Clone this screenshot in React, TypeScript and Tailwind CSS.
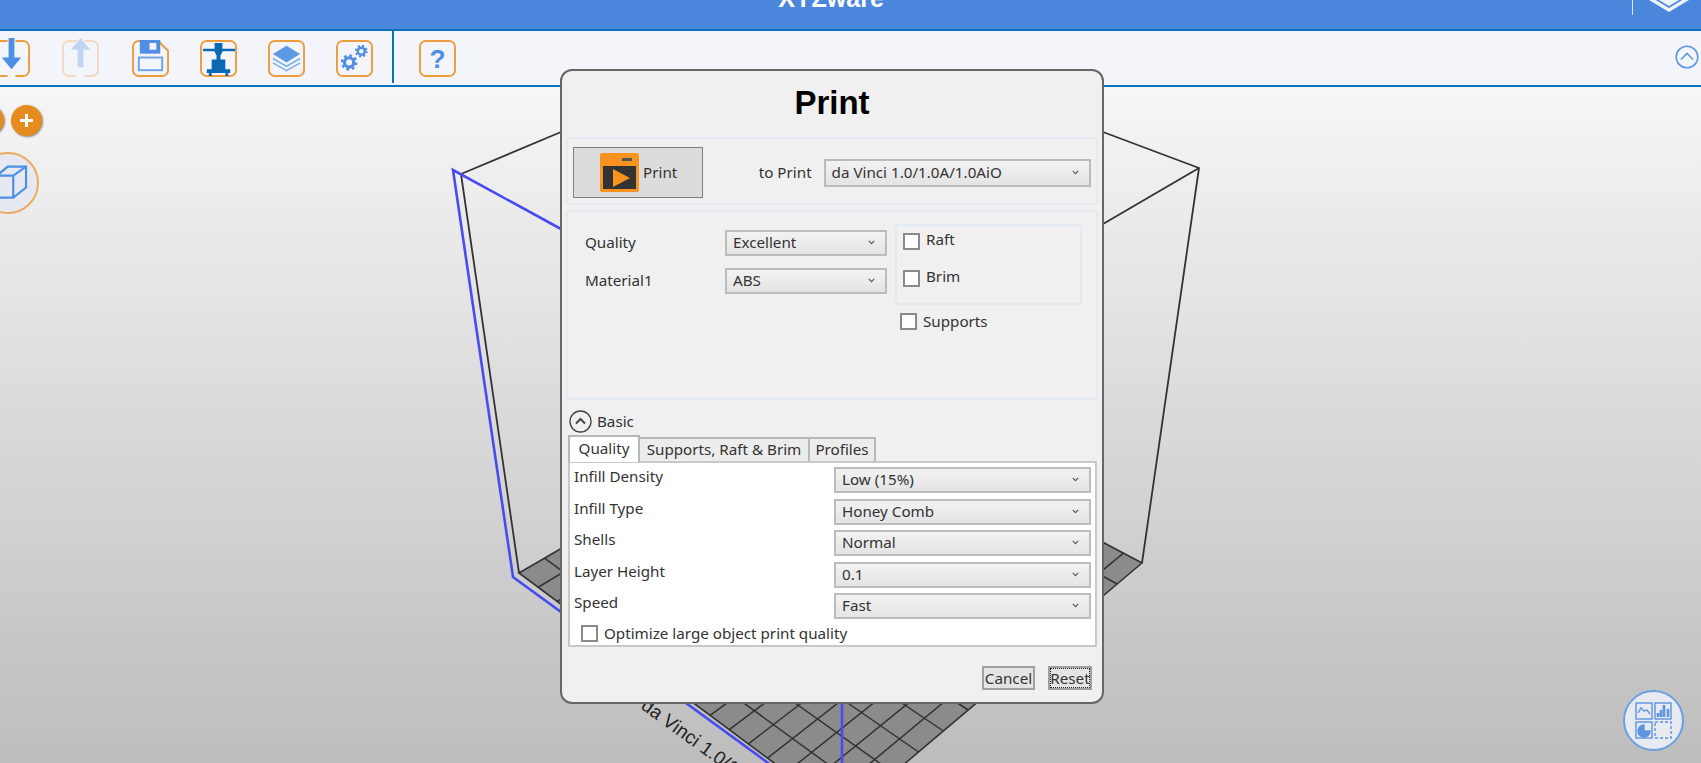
import { ReactNode } from 'react';

const ORANGE = '#ee9d3e';
const BLUE = '#4f8fe3';
const DARK = '#0a69b5';

// floor corners in page coordinates
const L = [519, 573];
const T = [825, 395];
const R = [1142, 563];
const B = [844, 815];

function lerp(a: number[], b: number[], t: number) {
  return [a[0] + (b[0] - a[0]) * t, a[1] + (b[1] - a[1]) * t];
}

function floorLines() {
  const lines: number[][][] = [];
  const nA = 17;
  const nB = 12;
  for (let i = 1; i < nA; i++) lines.push([lerp(L, B, i / nA), lerp(T, R, i / nA)]);
  for (let i = 1; i < nB; i++) lines.push([lerp(L, T, i / nB), lerp(B, R, i / nB)]);
  return lines;
}

function Scene() {
  return (
    <svg className="absolute left-0 top-[-87px] w-[1701px] h-[763px]" viewBox="0 0 1701 763">
      <polygon points={[L, T, R, B].map(p => p.join(',')).join(' ')} fill="#8b8b8b" stroke="#333" strokeWidth="1.6" />
      {floorLines().map((l, i) => (
        <line key={i} x1={l[0][0]} y1={l[0][1]} x2={l[1][0]} y2={l[1][1]} stroke="#333" strokeWidth="1.5" />
      ))}
      {/* bounding box */}
      <g stroke="#333" strokeWidth="1.8" fill="none">
        <path d="M461 174 L519 573" />
        <path d="M461 174 L561 132" />
        <path d="M1103 132 L1199 168 L1142 563" />
        <path d="M1199 168 L1103 224" />
      </g>
      <g stroke="#4a4af0" strokeWidth="2.6" fill="none">
        <path d="M561 229 L453 170 L513 577 L775 768" />
        <path d="M842 695 L842 763" />
      </g>
      <text x="640" y="708" transform="rotate(36 640 708)" fontFamily="'Liberation Sans', sans-serif" fontSize="19" fill="#222">
        da Vinci 1.0/1.0A/1.0AiO
      </text>
    </svg>
  );
}

function Frame({ children, className = '', frame = true }: { children: ReactNode; className?: string; frame?: boolean }) {
  return (
    <svg className={`w-[37px] h-[37px] shrink-0 overflow-visible ${className}`} viewBox="0 0 38 38">
      {frame && <rect x="1" y="1" width="36" height="36" rx="6" fill="none" stroke={ORANGE} strokeWidth="2" />}
      {children}
    </svg>
  );
}

function Gear({ cx, cy, r }: { cx: number; cy: number; r: number }) {
  const c = 2 * Math.PI * (r + 0.5);
  return (
    <g fill="none" stroke={BLUE}>
      <circle cx={cx} cy={cy} r={r * 0.72} strokeWidth={r * 0.5} />
      <circle cx={cx} cy={cy} r={r + 0.5} strokeWidth={r * 0.42} strokeDasharray={`${c / 16} ${c / 16}`} />
    </g>
  );
}

function Toolbar() {
  return (
    <div className="h-[54px] bg-[#f3f5fa] flex items-center shrink-0">
      <div className="flex items-center gap-[31px] -ml-[7px]">
        <Frame>
          <path d="M19 -2 V38" stroke="#f3f5fa" strokeWidth="8" />
          <path d="M16 -2 H22 V18 H29 L19 30 L9 18 H16 Z" fill={BLUE} />
        </Frame>
        <Frame className="opacity-30 ml-[1px]">
          <path d="M19 -2 V38" stroke="#f3f5fa" strokeWidth="8" />
          <path d="M19 -2 L29 10 H22 V28 H16 V10 H9 Z" fill={BLUE} />
        </Frame>
        <Frame frame={false} className="ml-[2px]">
          <path d="M7 1 H27 L37 11 V31 A6 6 0 0 1 31 37 H7 A6 6 0 0 1 1 31 V7 A6 6 0 0 1 7 1 Z" fill="none" stroke={ORANGE} strokeWidth="2" />
          <rect x="8" y="0" width="21" height="14" fill={BLUE} />
          <rect x="18" y="3" width="7" height="7" fill="#f3f5fa" />
          <rect x="7" y="18" width="24" height="13" fill="none" stroke="#6fa3e8" strokeWidth="2" />
        </Frame>
        <Frame>
          <rect x="3" y="9" width="33" height="2.5" fill={DARK} />
          <path d="M15 3 H23 V12 L21 16 V20 H26 V30 H31 V34 H7 V30 H12 V20 H17 V16 L15 12 Z" fill={DARK} />
          <rect x="9" y="34" width="3" height="3" fill={DARK} />
          <rect x="26" y="34" width="3" height="3" fill={DARK} />
        </Frame>
        <Frame>
          <path d="M19 6 L33 14.5 L19 23 L5 14.5 Z" fill="#5c9ae6" />
          <path d="M5 19 L19 27 L33 19" fill="none" stroke="#7eb0ec" strokeWidth="1.6" />
          <path d="M5 23.5 L19 31.5 L33 23.5" fill="none" stroke="#7eb0ec" strokeWidth="1.6" />
        </Frame>
        <Frame>
          <Gear cx={13.5} cy={23} r={6.6} />
          <Gear cx={26} cy={11.5} r={5} />
        </Frame>
      </div>
      <div className="w-[2px] h-[52px] self-start ml-[19px] mr-[25px] bg-[#0a6fbd]" />
      <Frame>
        <text x="19" y="29" textAnchor="middle" fontFamily="'Liberation Sans', sans-serif" fontWeight="700" fontSize="27" fill={BLUE}>?</text>
      </Frame>
      <svg className="w-[24px] h-[24px] ml-auto mr-[2px] mb-[2px]" viewBox="0 0 24 24" fill="none" stroke="#5f98e2" strokeWidth="1.6">
        <circle cx="12" cy="12" r="10.8" />
        <path d="M6 14.5 L12 8.5 L18 14.5" />
      </svg>
    </div>
  );
}

function Select({ value, className }: { value: string; className: string }) {
  return (
    <div className={`flex items-center justify-between border-2 border-[#bcbcbc] bg-gradient-to-b from-[#f2f2f2] to-[#e4e4e4] pl-[6px] pr-[10px] pb-[1px] text-[15.2px] text-[#333] ${className}`}>
      <span>{value}</span>
      <svg className="w-[7px] h-[5px]" viewBox="0 0 9 6" fill="none" stroke="#555" strokeWidth="1.4">
        <path d="M1 1 L4.5 4.5 L8 1" />
      </svg>
    </div>
  );
}

function Check({ label, textClass = 'ml-[6px]' }: { label: string; textClass?: string }) {
  return (
    <div className="flex items-center text-[15.2px] text-[#333] h-[18px]">
      <span className="w-[17px] h-[17px] border-2 border-[#8a8a8a] bg-white shrink-0" />
      <span className={textClass}>{label}</span>
    </div>
  );
}

function Group({ className, children }: { className: string; children: ReactNode }) {
  return <div className={`rounded-[4px] border-2 border-[#e2e9f1] ${className}`}>{children}</div>;
}

const ROWS = [
  ['Infill Density', 'Low (15%)'],
  ['Infill Type', 'Honey Comb'],
  ['Shells', 'Normal'],
  ['Layer Height', '0.1'],
  ['Speed', 'Fast'],
];

function PrintDialog() {
  return (
    <div className="absolute left-[560px] top-[69px] w-[544px] h-[635px] rounded-[12px] border-2 border-[#666] bg-[#f0f0f0] px-[4px] text-[#333]">
      <div className="h-[66px] flex items-center justify-center font-bold text-[33px] text-black font-['Liberation_Sans',sans-serif] pb-[2px]">
        Print
      </div>

      <Group className="h-[68px] flex items-center pl-[5px] pr-[5px] pt-[3px]">
        <div className="w-[130px] h-[51px] bg-[#dcdcdc] border-[1.5px] border-[#808080] flex items-center pl-[26px] gap-[4px] text-[15.2px]">
          <svg className="w-[39px] h-[39px] shrink-0" viewBox="0 0 39 39">
            <rect x="0" y="0" width="39" height="39" rx="2" fill="#f7931e" />
            <rect x="3" y="13" width="33" height="23" fill="#333" />
            <rect x="22" y="5" width="10" height="3" fill="#555" />
            <path d="M13 16 L30 25 L13 34 Z" fill="#f7931e" />
          </svg>
          Print
        </div>
        <span className="ml-[56px] text-[15.2px] w-[65px]">to Print</span>
        <Select value="da Vinci 1.0/1.0A/1.0AiO" className="w-[268px] h-[28px]" />
      </Group>

      <Group className="h-[190px] mt-[5px] flex">
        <div className="pl-[17px] pt-[18px] flex flex-col gap-[12px]">
          {[['Quality', 'Excellent'], ['Material1', 'ABS']].map(([label, value]) => (
            <div key={label} className="flex items-center text-[15.2px]">
              <span className="w-[140px] pb-[2px]">{label}</span>
              <Select value={value} className="w-[162px] h-[26px]" />
            </div>
          ))}
        </div>
        <div className="ml-[8px] pt-[12px]">
          <Group className="w-[187px] h-[81px] pl-[6px] pt-[6px] flex flex-col gap-[19px]">
            <Check label="Raft" textClass="ml-[6px] -mt-[3px]" />
            <Check label="Brim" textClass="ml-[6px] -mt-[3px]" />
          </Group>
          <div className="mt-[7px] pl-[5px]">
            <Check label="Supports" />
          </div>
        </div>
      </Group>

      <div className="mt-[9px] h-[24px] flex items-center gap-[5px] text-[15.2px] pl-[3px]">
        <svg className="w-[23px] h-[23px]" viewBox="0 0 23 23" fill="none" stroke="#444">
          <circle cx="11.5" cy="11.5" r="10.5" strokeWidth="1.3" />
          <path d="M7 13.5 L11.5 9 L16 13.5" strokeWidth="2" />
        </svg>
        Basic
      </div>

      <div className="flex items-end h-[26px] mt-[2px] pl-[2px] text-[15.2px] relative z-10">
        <div className="w-[72px] h-[27px] -mb-[1px] pb-[2px] bg-white border-2 border-b-0 border-[#b8b8b8] flex items-center justify-center">Quality</div>
        <div className="w-[170px] h-[24px] pb-[1px] bg-[#ececec] border-2 border-l-0 border-b-0 border-[#b8b8b8] flex items-center justify-center">Supports, Raft &amp; Brim</div>
        <div className="w-[66px] h-[24px] pb-[1px] bg-[#ececec] border-2 border-l-0 border-b-0 border-[#b8b8b8] flex items-center justify-center">Profiles</div>
      </div>

      <div className="ml-[2px] w-[529px] h-[186px] bg-white border-2 border-[#c8c8c8] pl-[4px] pr-[4px] pt-[4px] text-[15.2px]">
        <div className="flex flex-col gap-[5.5px]">
          {ROWS.map(([label, value]) => (
            <div key={label} className="flex items-start justify-between h-[26px]">
              <span className="leading-[19px]">{label}</span>
              <Select value={value} className="w-[257px] h-[26px]" />
            </div>
          ))}
        </div>
        <div className="mt-[5px] pl-[7px]">
          <Check label="Optimize large object print quality" />
        </div>
      </div>

      <div className="flex justify-end gap-[13px] mt-[19px] pr-[6px] text-[15.2px]">
        <div className="w-[53px] h-[24px] bg-[#e4e4e4] border-2 border-[#a0a0a0] flex items-center justify-center">Cancel</div>
        <div className="w-[44px] h-[24px] bg-[#e4e4e4] border-2 border-[#a0a0a0] outline-1 outline-dotted outline-[#222] outline-offset-[-3px] flex items-center justify-center">Reset</div>
      </div>
    </div>
  );
}

export default function App() {
  return (
    <div className="relative w-[1701px] h-[763px] overflow-hidden flex flex-col font-['Noto_Sans',sans-serif]">
      <div className="h-[29px] bg-[#4a86dc] overflow-hidden flex justify-center pr-[39px] shrink-0">
        <span className="-mt-[14px] text-[25px] leading-[25px] font-bold text-white font-['Liberation_Sans',sans-serif]">XYZware</span>
      </div>
      <div className="absolute right-[11px] top-0 flex gap-[15px] items-start">
        <div className="w-[1px] h-[15px] bg-[#dfe8f6]" />
        <svg className="w-[42px] h-[13px]" viewBox="0 0 42 13">
          <path d="M21 -8 L41 0 L21 12 L1 0 Z" fill="#fff" opacity="0.9" />
          <path d="M6 -2 L21 7 L36 -2" fill="none" stroke="#4a86dc" strokeWidth="1.6" />
        </svg>
      </div>
      <div className="h-[2px] bg-[#0a6fbd] shrink-0" />
      <Toolbar />
      <div className="h-[2px] bg-[#0a6fbd] shrink-0" />

      <div className="relative flex-1 bg-gradient-to-b from-[#f6f6f6] to-[#bdbdbd] overflow-hidden">
        <Scene />
        <div className="absolute left-[-26px] top-[18px] w-[30px] h-[30px] rounded-full bg-[#e68c1f] shadow-[1px_1px_2px_#888]" />
        <div className="absolute left-[11px] top-[18px] w-[31px] h-[31px] rounded-full bg-[#e68c1f] shadow-[1px_1px_2px_#888] flex items-center justify-center">
          <svg className="w-[13px] h-[13px]" viewBox="0 0 13 13">
            <path d="M5 0 H8 V5 H13 V8 H8 V13 H5 V8 H0 V5 H5 Z" fill="#fff" />
          </svg>
        </div>
        <div className="absolute left-[-23px] top-[65px] w-[62px] h-[62px] rounded-full bg-[#e6e9f1] border-2 border-[#eeaa62] flex items-center justify-center">
          <svg className="w-[46px] h-[46px] ml-[16px]" viewBox="0 0 46 46" fill="none" stroke={BLUE} strokeWidth="2.4">
            <path d="M2 15 L14 5 H34 V28 L20 39 H2 Z" />
            <path d="M2 15 H20 V39 M20 15 L34 5" />
          </svg>
        </div>
        <div className="absolute left-[1623px] top-[603px] w-[61px] h-[61px] rounded-full bg-[#e8eaf2] border-2 border-[#6a9fe0] flex items-center justify-center">
          <svg className="w-[38px] h-[38px]" viewBox="0 0 38 38" fill="none" stroke="#5c94de" strokeWidth="1.4">
            <rect x="1" y="1" width="16" height="16" />
            <path d="M3 11 L6 6 L9 9 L12 8 L15 12" />
            <rect x="20" y="1" width="16" height="16" />
            <path d="M23 15 V11 M26 15 V8 M29 15 V3 M33 15 V7" strokeWidth="2.6" />
            <rect x="1" y="20" width="16" height="16" />
            <path d="M9 23 A6 6 0 1 0 15 29 L9 29 Z" fill="#5c94de" />
            <rect x="20" y="20" width="16" height="16" strokeDasharray="3 2" />
          </svg>
        </div>
      </div>

      <PrintDialog />
    </div>
  );
}
